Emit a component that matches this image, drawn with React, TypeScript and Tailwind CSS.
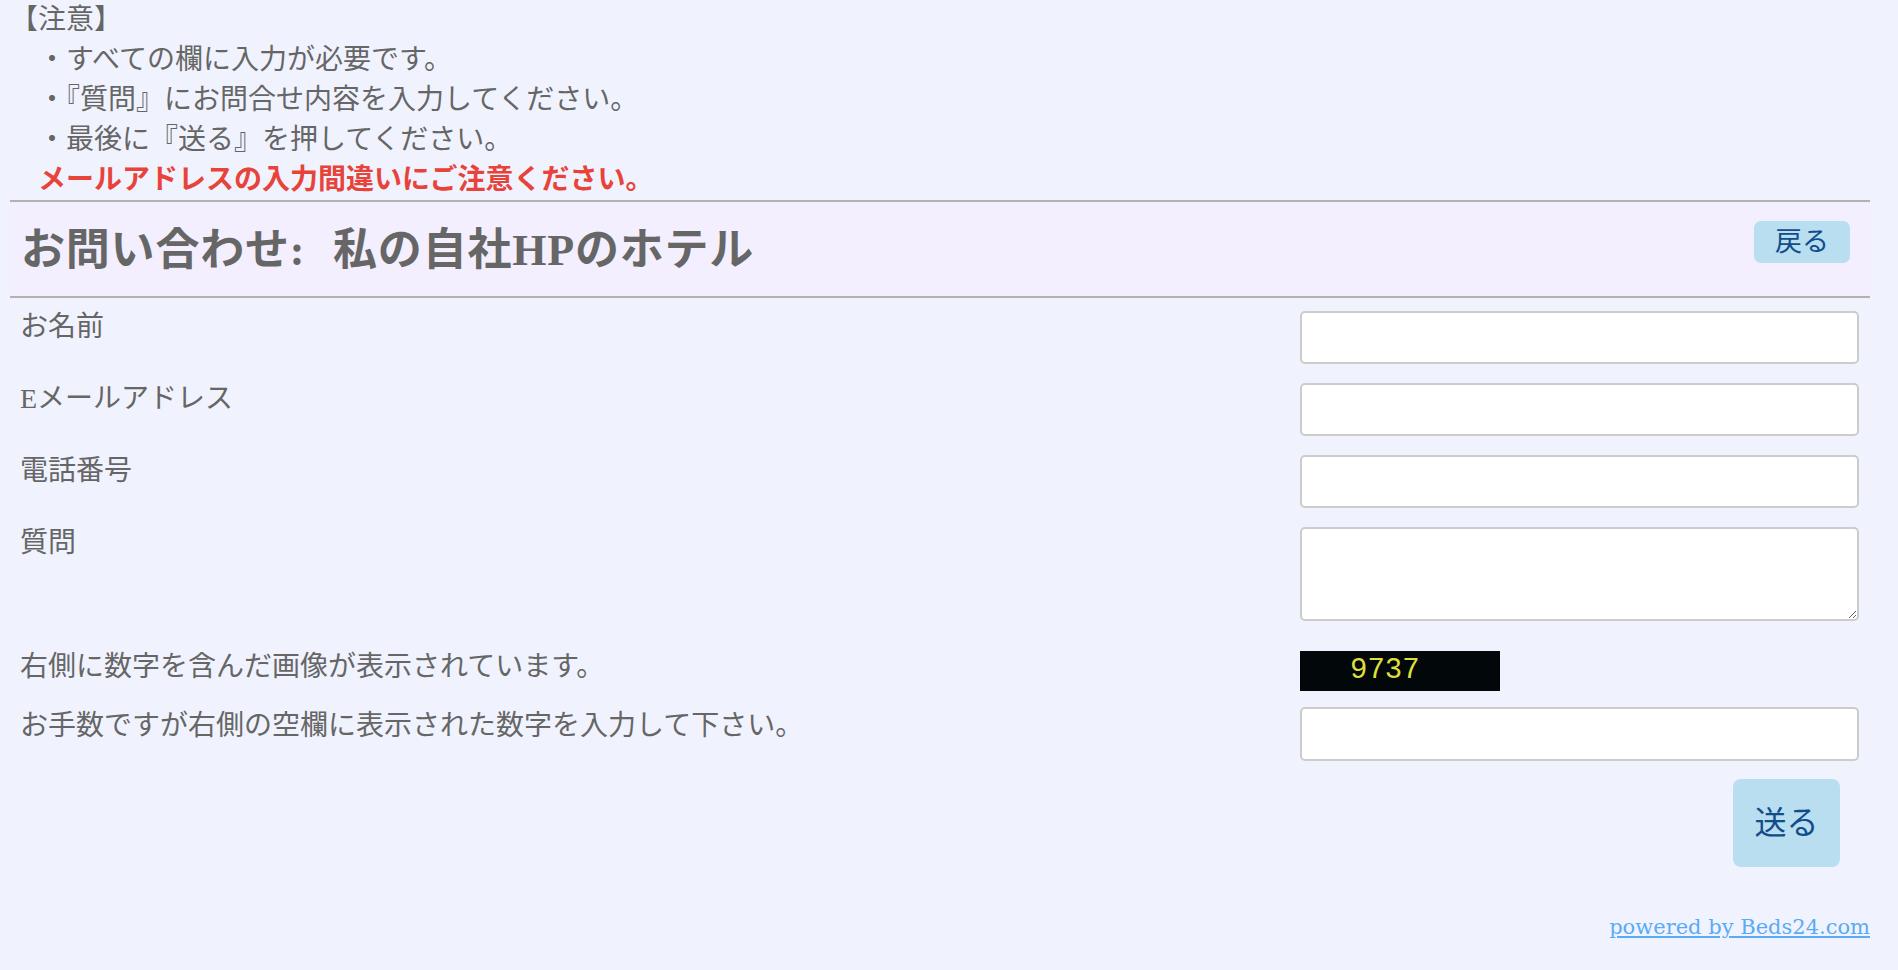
import React from 'react';

const font = { fontFamily: '"Liberation Serif", "Noto Sans CJK JP", serif' };

const fields = [
  { label: 'お名前', tall: false },
  { label: 'Eメールアドレス', tall: false },
  { label: '電話番号', tall: false },
  { label: '質問', tall: true },
];

const App: React.FC = () => {
  return (
    <div className="h-[970px] overflow-hidden w-full bg-[#f0f3fe] text-[#666666]" style={font}>
      <div className="ml-[10px] w-[1860px]">
        {/* notice */}
        <div className="text-[28px] leading-[40px]">
          <div>【注意】</div>
          <div>　・すべての欄に入力が必要です。</div>
          <div>　・『質問』にお問合せ内容を入力してください。</div>
          <div>　・最後に『送る』を押してください。</div>
          <div className="font-bold text-[#e8433a]">　メールアドレスの入力間違いにご注意ください。</div>
        </div>

        {/* header */}
        <div className="flex justify-between items-start h-[98px] border-y-2 border-[#b2b2b2] bg-[#f3effe]">
          <h1 className="pl-[11px] pt-[23px] text-[44px] leading-[52px] font-bold text-[#666666] tracking-[0.8px]">
            お問い合わせ: <span className="ml-[16px]">私の自社HPのホテル</span>
          </h1>
          <button className="mt-[19px] mr-[20px] w-[96px] h-[42px] rounded-[7px] bg-[#b8def0] text-[27px] leading-[42px] text-[#124c8c]">
            戻る
          </button>
        </div>

        {/* form */}
        <div className="flex flex-col pt-[13px]">
          <div className="flex flex-col gap-[19px]">
            {fields.map((f) => (
              <div key={f.label} className="flex items-start justify-between">
                <label className="pl-[10px] text-[28px] leading-[32px]">{f.label}</label>
                {f.tall ? (
                  <textarea className="mr-[11px] w-[559px] h-[94px] rounded-[5px] border-2 border-[#cccccc] bg-white outline-none" />
                ) : (
                  <input
                    type="text"
                    className="mr-[11px] w-[559px] h-[53px] rounded-[5px] border-2 border-[#cccccc] bg-white outline-none"
                  />
                )}
              </div>
            ))}
          </div>

          <div className="flex items-start justify-between mt-[30px]">
            <div className="pl-[10px] text-[28px] leading-[32px]">右側に数字を含んだ画像が表示されています。</div>
            <div className="mr-[11px] w-[559px]">
              <div className="w-[200px] h-[40px] bg-[#02080a] pl-[50px] text-[29px] leading-[40px] text-[#dede3c] font-['Liberation_Mono',monospace]">
                9737
              </div>
            </div>
          </div>

          <div className="flex items-start justify-between mt-[16px]">
            <div className="pl-[10px] pt-[3px] text-[28px] leading-[32px]">お手数ですが右側の空欄に表示された数字を入力して下さい。</div>
            <input
              type="text"
              className="mr-[11px] w-[559px] h-[54px] rounded-[5px] border-2 border-[#cccccc] bg-white outline-none"
            />
          </div>

          <div className="flex justify-end mt-[18px]">
            <button className="mr-[30px] w-[107px] h-[88px] rounded-[8px] bg-[#b8def0] text-[32px] text-[#124c8c]">
              送る
            </button>
          </div>

          <div className="flex justify-end mt-[46px]">
            <a href="#" className="text-[21px] leading-[28px] text-[#5aabf5] underline font-['DejaVu_Serif',serif]">
              powered by Beds24.com
            </a>
          </div>
        </div>
      </div>
    </div>
  );
};

export default App;
